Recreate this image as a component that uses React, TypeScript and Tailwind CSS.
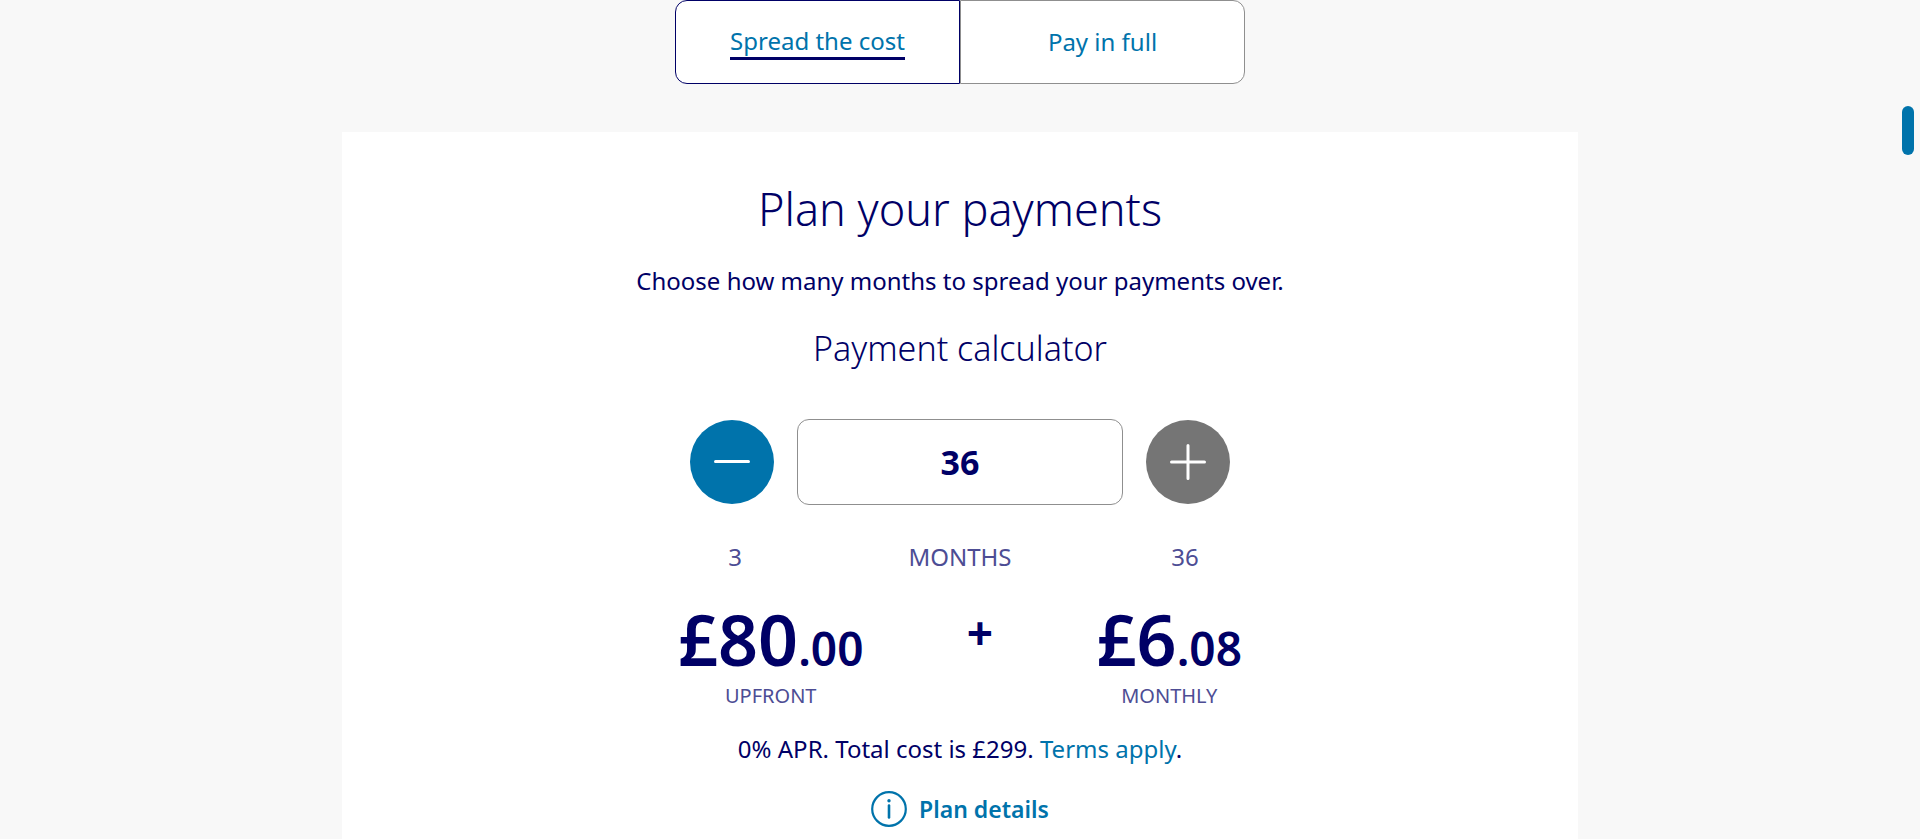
import { useState } from "react";

const MIN_MONTHS = 3;
const MAX_MONTHS = 36;
const UPFRONT = 80;
const TOTAL = 299;

function Price({ value, label }: { value: number; label: string }) {
  const [pounds, pence] = value.toFixed(2).split(".");
  return (
    <div className="flex flex-col items-center">
      <p className="text-[70px] leading-[80px] font-semibold">
        £{pounds}
        <span className="text-[46px] leading-none">.{pence}</span>
      </p>
      <p className="mt-[3px] text-[20px] leading-7 text-[#4d4d94]">{label}</p>
    </div>
  );
}

export default function App() {
  const [months, setMonths] = useState(36);
  const [tab, setTab] = useState("spread");
  const monthly = Math.floor(((TOTAL - UPFRONT) / months) * 100) / 100;
  const spread = tab === "spread";

  return (
    <div className="min-h-screen bg-[#f8f8f8] font-['Noto_Sans',sans-serif] text-[#000066]">
      <div className="mx-auto grid h-[84px] w-full max-w-[570px] grid-cols-2 text-[24px] leading-8 text-[#0073ab]">
        <button
          type="button"
          onClick={() => setTab("spread")}
          className={`rounded-l-xl border bg-white ${spread ? "border-[#000066]" : "border-[#8f8f8f]"}`}
        >
          <span className={spread ? "inline-block border-b-3 border-[#000066]" : "inline-block"}>Spread the cost</span>
        </button>
        <button
          type="button"
          onClick={() => setTab("full")}
          className={`rounded-r-xl border bg-white ${spread ? "border-[#8f8f8f]" : "border-[#000066]"}`}
        >
          <span className={spread ? "inline-block" : "inline-block border-b-3 border-[#000066]"}>Pay in full</span>
        </button>
      </div>

      <main className="mx-auto mt-12 flex w-full max-w-[1236px] flex-col items-center bg-white px-4 pt-[49px] pb-10 text-[24px] leading-8">
        <h1 className="text-[45px] leading-[56px] font-light">Plan your payments</h1>
        <p className="mt-7">Choose how many months to spread your payments over.</p>
        <h2 className="mt-[31px] text-[34px] leading-10 font-light">Payment calculator</h2>

        <div className="mt-[51px] flex w-full max-w-[540px] items-center gap-[23px]">
          <button
            type="button"
            aria-label="Fewer months"
            disabled={months <= MIN_MONTHS}
            onClick={() => setMonths(months - 1)}
            className="flex size-[84px] shrink-0 items-center justify-center rounded-full bg-[#0073ab] text-white disabled:bg-[#757575]"
          >
            <svg viewBox="0 0 36 36" className="size-9" fill="none" stroke="currentColor" strokeWidth="3" strokeLinecap="round">
              <path d="M1.5 17.5h33" />
            </svg>
          </button>
          <input
            type="text"
            aria-label="Months"
            readOnly
            value={months}
            className="h-[86px] w-full min-w-0 rounded-xl border border-[#8f8f8f] bg-white text-center text-[34px] font-bold"
          />
          <button
            type="button"
            aria-label="More months"
            disabled={months >= MAX_MONTHS}
            onClick={() => setMonths(months + 1)}
            className="flex size-[84px] shrink-0 items-center justify-center rounded-full bg-[#0073ab] text-white disabled:bg-[#757575]"
          >
            <svg viewBox="0 0 36 36" className="size-9" fill="none" stroke="currentColor" strokeWidth="3" strokeLinecap="round">
              <path d="M1.5 18h33M18 1.5v33" />
            </svg>
          </button>
        </div>

        <div className="mt-9 flex w-full max-w-[540px] justify-between text-center text-[#4d4d94]">
          <span className="w-[90px]">{MIN_MONTHS}</span>
          <span>MONTHS</span>
          <span className="w-[90px]">{MAX_MONTHS}</span>
        </div>

        <div className="mt-[26px] flex w-full max-w-[564px] justify-between">
          <Price value={UPFRONT} label="UPFRONT" />
          <span className="pt-[3px] text-[46px] leading-[60px] font-bold">+</span>
          <Price value={monthly} label="MONTHLY" />
        </div>

        <p className="mt-[23px]">
          0% APR. Total cost is £{TOTAL}.{" "}
          <a href="#terms" className="text-[#0073ab]">Terms apply</a>.
        </p>
        <button type="button" className="mt-[26px] flex items-center gap-3 text-[23px] font-semibold text-[#0073ab]">
          <svg viewBox="0 0 36 36" className="size-9" fill="none" stroke="currentColor" strokeLinecap="round">
            <circle cx="18" cy="18" r="16.8" strokeWidth="2.2" />
            <path d="M18 14.5v12" strokeWidth="2.6" />
            <circle cx="18" cy="9.7" r="1.7" fill="currentColor" stroke="none" />
          </svg>
          Plan details
        </button>
      </main>

      <div className="fixed top-[106px] right-[6px] h-[49px] w-3 rounded-full bg-[#0073ab]" />
    </div>
  );
}
